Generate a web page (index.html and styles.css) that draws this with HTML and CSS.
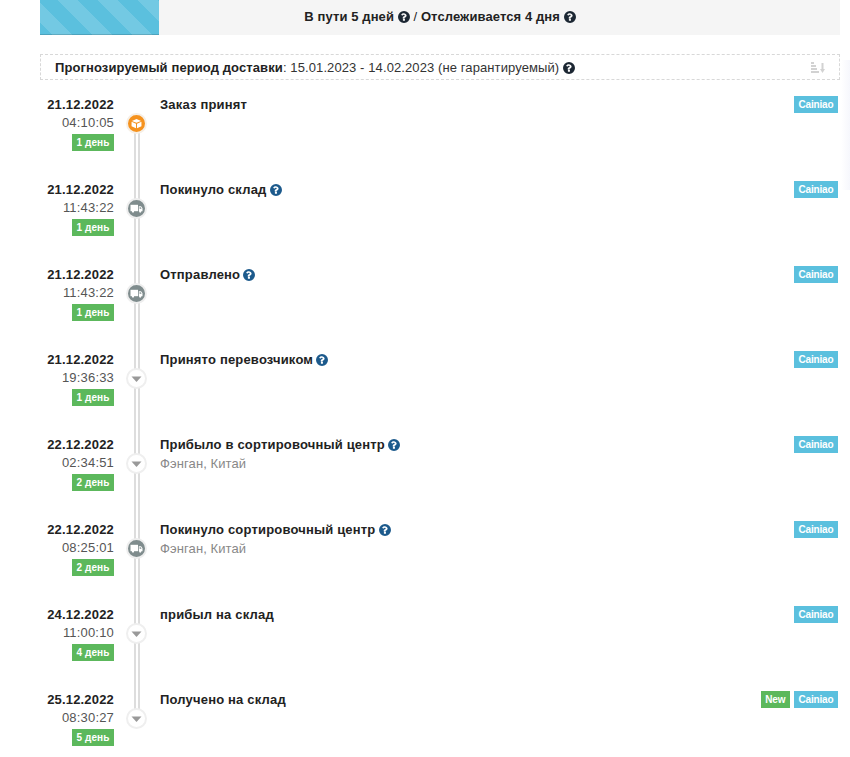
FILE: index.html
```html
<!DOCTYPE html>
<html lang="ru">
<head>
<meta charset="utf-8">
<title>Отслеживание</title>
<link rel="stylesheet" href="styles.css">
</head>
<body>
<svg class="defs" width="0" height="0" aria-hidden="true">
  <defs>
    <symbol id="q" viewBox="0 0 24 24">
      <path fill="currentColor" fill-rule="evenodd" d="M12 0a12 12 0 1 0 0 24a12 12 0 0 0 0-24zM13.900 18.900a.6.6 0 0 1-.6.6h-2.900a.6.6 0 0 1-.6-.6v-2.800a.6.6 0 0 1 .6-.6h2.900a.6.6 0 0 1 .6.6zM17.200 9.200c0 2.400-1.600 3.300-2.800 4c-.8.5-1.200.8-1.200 1.200a.5.5 0 0 1-.5.5h-2.800a.5.5 0 0 1-.5-.5v-.5c0-1.900 1.400-2.700 2.500-3.300c.9-.5 1.500-.8 1.500-1.500c0-.8-1-1.400-1.900-1.400c-1 0-1.500.3-2.200 1.200a.5.5 0 0 1-.7.1L6.700 7.900a.5.5 0 0 1-.1-.7C7.800 5.400 9.300 4.500 11.700 4.500c2.700 0 5.500 2.100 5.500 4.700z"/>
    </symbol>
    <symbol id="truck" viewBox="0 0 17 17">
      <rect x="2.500" y="4.800" width="7.500" height="6.400" fill="#fff"/>
      <path fill-rule="evenodd" d="M10.800 6.300h2.200l1.500 2v2.900h-3.700zM11.600 7.200v1.500h2l-1-1.500z" fill="#fff"/>
      <circle cx="5" cy="11.600" r="1.100" fill="#fff"/>
      <circle cx="12.200" cy="11.600" r="1.100" fill="#fff"/>
    </symbol>
    <symbol id="box" viewBox="0 0 24 24">
      <path d="M12 5.500l6.500 2.800L12 11 5.500 8.300z" fill="#fff"/>
      <path d="M5 9.500l6.300 2.700v6.600L5 16z" fill="#fff"/>
      <path d="M19 9.500l-6.300 2.700v6.600L19 16z" fill="#fff"/>
    </symbol>
    <symbol id="caret" viewBox="0 0 17 17">
      <path d="M3.500 6.500h10l-5 5.500z" fill="#999"/>
    </symbol>
  </defs>
</svg>
<main class="page">
  <header class="summary">
    <div class="stripes"></div>
    <div class="summary-text">В пути 5 дней <svg class="q dark"><use href="#q"/></svg> <span class="thin">/</span> Отслеживается 4 дня <svg class="q dark"><use href="#q"/></svg></div>
  </header>

  <section class="forecast">
    <div><b>Прогнозируемый период доставки</b>: 15.01.2023 - 14.02.2023 (не гарантируемый) <svg class="q dark"><use href="#q"/></svg></div>
    <svg class="sort" viewBox="0 0 14 14" aria-hidden="true"><path d="M0 1h3v2H0zM0 4h5v2H0zM0 7h6v2H0zM0 10h8v2H0zM10.500 2h2v6h1.500l-2.500 4l-2.500-4h1.500z" fill="#d2d2d2"/></svg>
  </section>

  <section class="timeline">
    <article class="event">
      <div class="when"><b>21.12.2022</b><span class="time">04:10:05</span><span class="tag green">1 день</span></div>
      <div class="mark"><span class="dot orange"><svg><use href="#box"/></svg></span></div>
      <div class="what"><b>Заказ принят</b></div>
      <div class="tags"><span class="tag blue">Cainiao</span></div>
    </article>
    <article class="event">
      <div class="when"><b>21.12.2022</b><span class="time">11:43:22</span><span class="tag green">1 день</span></div>
      <div class="mark"><span class="dot grey"><svg><use href="#truck"/></svg></span></div>
      <div class="what"><b>Покинуло склад</b> <svg class="q navy"><use href="#q"/></svg></div>
      <div class="tags"><span class="tag blue">Cainiao</span></div>
    </article>
    <article class="event">
      <div class="when"><b>21.12.2022</b><span class="time">11:43:22</span><span class="tag green">1 день</span></div>
      <div class="mark"><span class="dot grey"><svg><use href="#truck"/></svg></span></div>
      <div class="what"><b>Отправлено</b> <svg class="q navy"><use href="#q"/></svg></div>
      <div class="tags"><span class="tag blue">Cainiao</span></div>
    </article>
    <article class="event">
      <div class="when"><b>21.12.2022</b><span class="time">19:36:33</span><span class="tag green">1 день</span></div>
      <div class="mark"><span class="dot white"><svg><use href="#caret"/></svg></span></div>
      <div class="what"><b>Принято перевозчиком</b> <svg class="q navy"><use href="#q"/></svg></div>
      <div class="tags"><span class="tag blue">Cainiao</span></div>
    </article>
    <article class="event">
      <div class="when"><b>22.12.2022</b><span class="time">02:34:51</span><span class="tag green">2 день</span></div>
      <div class="mark"><span class="dot white"><svg><use href="#caret"/></svg></span></div>
      <div class="what"><b>Прибыло в сортировочный центр</b> <svg class="q navy"><use href="#q"/></svg><span class="place">Фэнган, Китай</span></div>
      <div class="tags"><span class="tag blue">Cainiao</span></div>
    </article>
    <article class="event">
      <div class="when"><b>22.12.2022</b><span class="time">08:25:01</span><span class="tag green">2 день</span></div>
      <div class="mark"><span class="dot grey"><svg><use href="#truck"/></svg></span></div>
      <div class="what"><b>Покинуло сортировочный центр</b> <svg class="q navy"><use href="#q"/></svg><span class="place">Фэнган, Китай</span></div>
      <div class="tags"><span class="tag blue">Cainiao</span></div>
    </article>
    <article class="event">
      <div class="when"><b>24.12.2022</b><span class="time">11:00:10</span><span class="tag green">4 день</span></div>
      <div class="mark"><span class="dot white"><svg><use href="#caret"/></svg></span></div>
      <div class="what"><b>прибыл на склад</b></div>
      <div class="tags"><span class="tag blue">Cainiao</span></div>
    </article>
    <article class="event last">
      <div class="when"><b>25.12.2022</b><span class="time">08:30:27</span><span class="tag green">5 день</span></div>
      <div class="mark"><span class="dot white"><svg><use href="#caret"/></svg></span></div>
      <div class="what"><b>Получено на склад</b></div>
      <div class="tags"><span class="tag green">New</span><span class="tag blue">Cainiao</span></div>
    </article>
  </section>
</main>
</body>
</html>
```

FILE: styles.css
```css
html, body {
  margin: 0;
  padding: 0;
  background: #fff;
}
body {
  font-family: "Liberation Sans", Arial, sans-serif;
  font-size: 13px;
  letter-spacing: .1px;
  line-height: 17px;
  color: #333;
  overflow: hidden;
  height: 757px;
}
body::after {
  content: "";
  position: absolute;
  top: 60px;
  right: 0;
  width: 9px;
  height: 130px;
  background: linear-gradient(to right, rgba(240,243,252,0), #f6f7fc);
}
.defs { position: absolute; }
.page {
  width: 800px;
  margin-left: 40px;
}
b { color: #222; }

.summary {
  display: flex;
  height: 35px;
  background: #f5f5f5;
}
.stripes {
  width: 119px;
  flex: none;
  background-color: #5bc0de;
  background-image: linear-gradient(45deg, rgba(255,255,255,.15) 25%, transparent 25%, transparent 50%, rgba(255,255,255,.15) 50%, rgba(255,255,255,.15) 75%, transparent 75%, transparent);
  background-size: 40px 40px;
  background-position: 18px 0;
  box-shadow: inset 0 -1px 0 rgba(0,0,0,.15);
}
.summary-text {
  flex: 1;
  padding-right: 119px;
  text-align: center;
  font-weight: 700;
  line-height: 33px;
  color: #222;
}
.thin { font-weight: 400; }

.q {
  width: 12px;
  height: 12px;
  vertical-align: -2px;
}
.dark { color: #1c2733; }
.navy {
  margin-left: -.5px;
  color: #1c5a8c;
}

.forecast {
  display: flex;
  justify-content: space-between;
  align-items: center;
  box-sizing: border-box;
  height: 26px;
  margin-top: 19px;
  padding: 0 14px;
  border: 1px dashed #d8d8d8;
}
.sort {
  width: 14px;
  height: 14px;
  margin-top: 2px;
}

.timeline {
  margin-top: 15px;
}
.event {
  display: flex;
  height: 85px;
}
.when {
  display: flex;
  flex-direction: column;
  align-items: flex-end;
  width: 74px;
  flex: none;
  padding-top: 1px;
}
.when b,
.what b,
.time { letter-spacing: .18px; }
.time {
  margin-top: 1px;
  color: #555;
}
.tag {
  display: inline-block;
  height: 17px;
  padding: 0 4.500px;
  font-size: 10px;
  letter-spacing: -.15px;
  font-weight: 700;
  line-height: 18px;
  color: #fff;
}
.when .tag {
  margin-top: 3px;
  box-sizing: border-box;
  width: 42px;
  padding: 0;
  letter-spacing: .1px;
  text-align: center;
}
.green { background: #5cb85c; }
.blue { background: #5bc0de; }

.mark {
  position: relative;
  width: 46px;
  flex: none;
}
.mark::after {
  content: "";
  position: absolute;
  left: 20px;
  top: 20px;
  width: 2px;
  height: 85px;
  background: #fff;
  border-left: 2px solid #ddd;
  border-right: 2px solid #ddd;
}
.last .mark::after { display: none; }
.dot {
  position: absolute;
  z-index: 1;
  left: 12px;
  top: 18px;
  box-sizing: border-box;
  width: 21px;
  height: 21px;
  border: 2px solid #f3f3f3;
  border-radius: 50%;
}
.dot svg {
  display: block;
  width: 17px;
  height: 17px;
}
.orange { background: #f5921e; border-color: #f6efe6; }
.grey { background: #7f8c8d; border-color: #eeeeee; }
.white { background: #fff; border-color: #efefef; }

.what {
  flex: 1;
  padding-top: 1px;
}
.place {
  display: block;
  margin-top: 2px;
  color: #888;
  letter-spacing: .1px;
}
.tags {
  display: flex;
  gap: 4px;
  padding: 1px 2px 0 0;
  align-items: flex-start;
}
```
